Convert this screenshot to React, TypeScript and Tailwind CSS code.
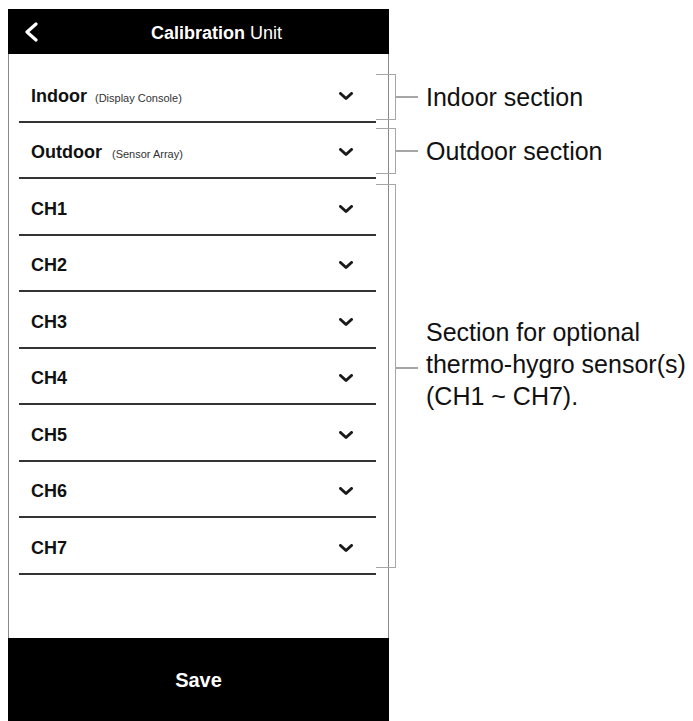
import React from "react";

const channels = ["CH1", "CH2", "CH3", "CH4", "CH5", "CH6", "CH7"];

interface RowProps {
  title: string;
  note?: string;
  noteGap?: string;
}

function Chevron() {
  return (
    <svg width="14" height="9" viewBox="0 0 14 9" className="shrink-0">
      <polyline points="1.5,1.5 7,6.5 12.5,1.5" fill="none" stroke="#1a1a1a" strokeWidth="3" strokeLinecap="round" strokeLinejoin="round" />
    </svg>
  );
}

function Row({ title, note, noteGap = "ml-2" }: RowProps) {
  return (
    <div className="h-[56.5px] flex items-center pt-[6px] pl-[12px] pr-[23px] border-b-2 border-[#333]">
      <div className="flex-1 flex items-baseline">
        <span className="text-[18px] font-bold text-[#111]">{title}</span>
        {note && <span className={`${noteGap} text-[11px] text-[#333]`}>{note}</span>}
      </div>
      <Chevron />
    </div>
  );
}

function Bracket({ h }: { h: string }) {
  return <div className={`${h} w-[20px] shrink-0 border-y-[1.5px] border-r-[1.5px] border-[#a6a6a6]`} />;
}

export default function App() {
  return (
    <div className="w-[693px] h-[721px] overflow-hidden bg-white flex items-start" style={{ fontFamily: '"Liberation Sans", Arial, sans-serif' }}>
      {/* phone screen */}
      <div className="ml-[8px] mt-[9px] w-[381px] h-[712px] flex flex-col shrink-0">
        <div className="h-[45px] bg-black flex items-center pl-[16px]">
          <svg width="14" height="20" viewBox="0 0 14 20" className="shrink-0">
            <polyline points="12,2 3,10 12,18" fill="none" stroke="#fff" strokeWidth="3.2" strokeLinecap="round" strokeLinejoin="round" />
          </svg>
          <div className="ml-[113px] text-[18px] text-white mt-[3px]">
            <span className="font-bold">Calibration</span> Unit
          </div>
        </div>
        <div className="flex-1 border-x-[1.5px] border-[#8a8a8a] pt-[12px]">
          <div className="ml-[10px] mr-[12px]">
            <Row title="Indoor" note="(Display Console)" />
            <Row title="Outdoor" note="(Sensor Array)" noteGap="ml-[10px]" />
            {channels.map((c) => (
              <Row key={c} title={c} />
            ))}
          </div>
        </div>
        <div className="h-[83px] bg-black flex items-center justify-center">
          <span className="text-[20px] font-bold text-white">Save</span>
        </div>
      </div>

      {/* annotations */}
      <div className="-ml-[13px] mt-[74px] flex flex-col text-[25px] text-[#111]">
        <div className="h-[46px] flex items-center">
          <Bracket h="h-full" />
          <div className="w-[22px] h-[1.5px] bg-[#a6a6a6]" />
          <span className="ml-[8px] leading-[32px]">Indoor section</span>
        </div>
        <div className="mt-[8px] h-[46px] flex items-center">
          <Bracket h="h-full" />
          <div className="w-[22px] h-[1.5px] bg-[#a6a6a6]" />
          <span className="ml-[8px] leading-[32px]">Outdoor section</span>
        </div>
        <div className="mt-[10px] h-[384px] flex items-start">
          <Bracket h="h-full" />
          <div className="mt-[183px] w-[22px] h-[1.5px] bg-[#a6a6a6]" />
          <div className="mt-[132px] ml-[8px] leading-[32px] whitespace-nowrap">
            Section for optional
            <br />
            thermo-hygro sensor(s)
            <br />
            (CH1 ~ CH7).
          </div>
        </div>
      </div>
    </div>
  );
}
